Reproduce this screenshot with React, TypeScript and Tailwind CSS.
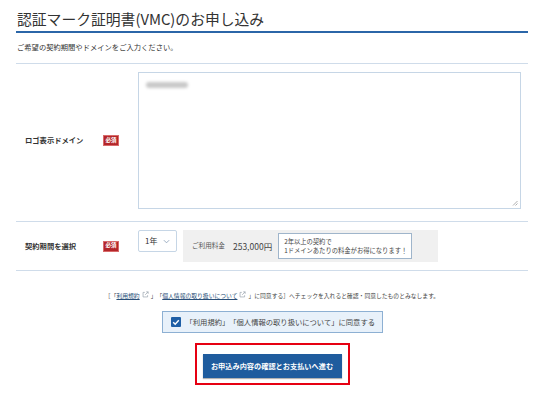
import React from 'react';

const Badge: React.FC = () => (
  <span className="inline-flex h-[11px] w-[16px] items-center justify-center border border-[#d86a6a] bg-[#b3262a] text-[5.5px] font-bold leading-none text-white">
    必須
  </span>
);

const ExtIcon: React.FC = () => (
  <svg width="7" height="7" viewBox="0 0 10 10" className="mx-[2px] inline-block align-baseline" fill="none" stroke="#9aa3ad" strokeWidth="1">
    <path d="M4 2H1.5v6.5H8V6" />
    <path d="M6 1.2h2.8V4M8.8 1.2L4.5 5.5" />
  </svg>
);

const App: React.FC = () => {
  return (
    <div className="h-[393px] w-[550px] bg-white font-['Noto_Sans_CJK_JP','Noto_Sans',sans-serif] text-[#333] [text-spacing-trim:space-all]">
      <div className="ml-[16px] w-[512px]">
        {/* Title */}
        <h1 className="border-b-2 border-[#2b66a8] pt-[8px] pb-[2px] pl-[1px] text-[14.8px] font-normal leading-[21px] text-[#333]">
          認証マーク証明書(VMC)のお申し込み
        </h1>
        <p className="pt-[9px] pb-[10px] pl-[1px] text-[7.3px] leading-[11px]">ご希望の契約期間やドメインをご入力ください。</p>

        {/* Domain row */}
        <div className="grid grid-cols-[122px_1fr] border-t border-[#cfdcea] pt-[8px] pb-[12px]">
          <div className="flex items-center pl-[9px]">
            <span className="w-[78px] text-[7.3px] font-bold">ロゴ表示ドメイン</span>
            <Badge />
          </div>
          <div className="relative h-[137px] w-[383px] border border-[#c6d6e6] bg-white">
            <span className="absolute left-[7px] top-[9px] h-[6px] w-[42px] rounded-sm bg-[#c9c9c9] blur-[1.5px]" />
            <svg width="6" height="6" viewBox="0 0 6 6" className="absolute bottom-[2px] right-[2px]" stroke="#9a9a9a" strokeWidth="0.8">
              <path d="M1 5.5L5.5 1M3.5 5.5L5.5 3.5" />
            </svg>
          </div>
        </div>

        {/* Term row */}
        <div className="grid grid-cols-[122px_1fr] border-t border-[#cfdcea] py-[8px]">
          <div className="flex items-center pl-[9px]">
            <span className="w-[78px] text-[7.3px] font-bold">契約期間を選択</span>
            <Badge />
          </div>
          <div className="flex items-start">
            <div className="flex h-[22px] w-[39px] items-center justify-between rounded-[2px] border border-[#c6d6e6] px-[6px] text-[8px]">
              <span>1年</span>
              <svg width="7" height="5" viewBox="0 0 8 5" fill="none" stroke="#8fa4ba" strokeWidth="1">
                <path d="M1 1l3 3 3-3" />
              </svg>
            </div>
            <div className="ml-[6px] flex h-[32px] w-[255px] items-center bg-[#f0f0f0] pl-[9px]">
              <span className="text-[6.6px] text-[#555]">ご利用料金</span>
              <span className="ml-[8px] text-[8.5px] text-[#444]">253,000円</span>
              <div className="ml-[6px] flex h-[26px] w-[134px] flex-col justify-center border border-[#9fb5cb] bg-white pl-[5px] text-[6.3px] leading-[9px] text-[#444]">
                <span>2年以上の契約で</span>
                <span>1ドメインあたりの料金がお得になります！</span>
              </div>
            </div>
          </div>
        </div>
        <div className="border-t border-[#cfdcea]" />

        {/* Consent */}
        <p className="mt-[20px] text-center text-[5.8px] leading-[9px] text-[#444]">
          ［「<span className="text-[#2a4f78] underline">利用規約</span>
          <ExtIcon />」「<span className="text-[#2a4f78] underline">個人情報の取り扱いについて</span>
          <ExtIcon />」に同意する］へチェックを入れると確認・同意したものとみなします。
        </p>
        <div className="mt-[11px] flex justify-center">
          <label className="flex h-[22px] w-[221px] items-center border border-[#8db0d3] bg-[#e8f1fa] pl-[8px] text-[7.3px] text-[#444]">
            <span className="mr-[5px] flex h-[10px] w-[10px] items-center justify-center rounded-[1px] bg-[#1f5fa6]">
              <svg width="8" height="8" viewBox="0 0 10 10" fill="none" stroke="white" strokeWidth="1.8">
                <path d="M1.5 5.2l2.5 2.5 4.5-5" />
              </svg>
            </span>
            「利用規約」「個人情報の取り扱いについて」に同意する
          </label>
        </div>

        {/* Submit */}
        <div className="mt-[10px] flex justify-center">
          <div className="border-2 border-[#e60012] px-[6px] py-[5px]">
            <button className="h-[24px] w-[139px] bg-[#1f5c9e] text-[7.2px] font-bold text-white shadow-[0_1px_1px_rgba(0,0,0,0.3)]">
              お申込み内容の確認とお支払いへ進む
            </button>
          </div>
        </div>
      </div>
    </div>
  );
};

export default App;
